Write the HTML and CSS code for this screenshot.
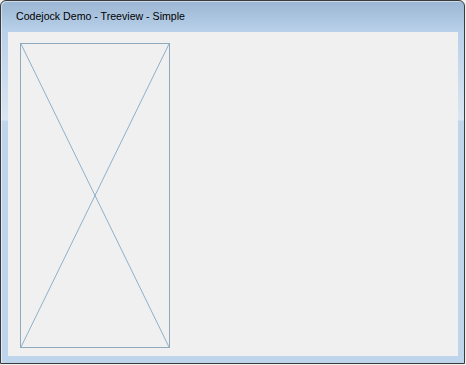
FILE: index.html
```html
<!DOCTYPE html>
<html lang="en">
<head>
  <meta charset="UTF-8" />
  <title>Codejock Demo - Treeview - Simple</title>
  <link rel="stylesheet" href="styles.css">
</head>
<body>
  <div class="window">
    <div class="titlebar">Codejock Demo - Treeview - Simple</div>
    <div class="frame">
      <div class="client">
        <!-- placeholder for the tree control -->
        <div class="tree-box">
          <svg class="cross" viewBox="0 0 148 303" preserveAspectRatio="none">
            <line x1="0" y1="0" x2="148" y2="303" />
            <line x1="148" y1="0" x2="0" y2="303" />
          </svg>
        </div>
      </div>
    </div>
  </div>
</body>
</html>
```

FILE: styles.css
```css
* { box-sizing: border-box; margin: 0; padding: 0; }
body {
  background-color: #f0f0f0;
  font-family: Tahoma, 'Liberation Sans', Arial, sans-serif;
}
.window {
  width: 465px;
  height: 364px;
  border: 1px solid #3b3b3b;
  border-radius: 6px 6px 0 0;
  display: flex;
  flex-direction: column;
  background: linear-gradient(to bottom,
    #9bb6d3 0px,
    #b8d0e9 30px,
    #bcd3eb 40px,
    #d9e6f3 119px,
    #bed5ec 120px,
    #bed5ec 100%);
  box-shadow: inset 1px 1px 0 rgba(255, 255, 255, 0.5);
  overflow: hidden;
}
.titlebar {
  flex: 0 0 31px;
  height: 31px;
  padding: 9px 0 0 15px;
  font-size: 10.6px;
  color: #000;
}
.frame {
  flex: 1;
  min-height: 0;
  padding: 0 6px 7px 7px;
  display: flex;
}
.client {
  flex: 1;
  background-color: #f0f0f0;
  padding: 11px 12px 0;
  overflow: hidden;
}
.tree-box {
  width: 150px;
  height: 305px;
  border: 1px solid #8fa9bd;
}
.cross {
  display: block;
  width: 100%;
  height: 100%;
}
.cross line {
  stroke: #8fb0c8;
  stroke-width: 1;
}
```
